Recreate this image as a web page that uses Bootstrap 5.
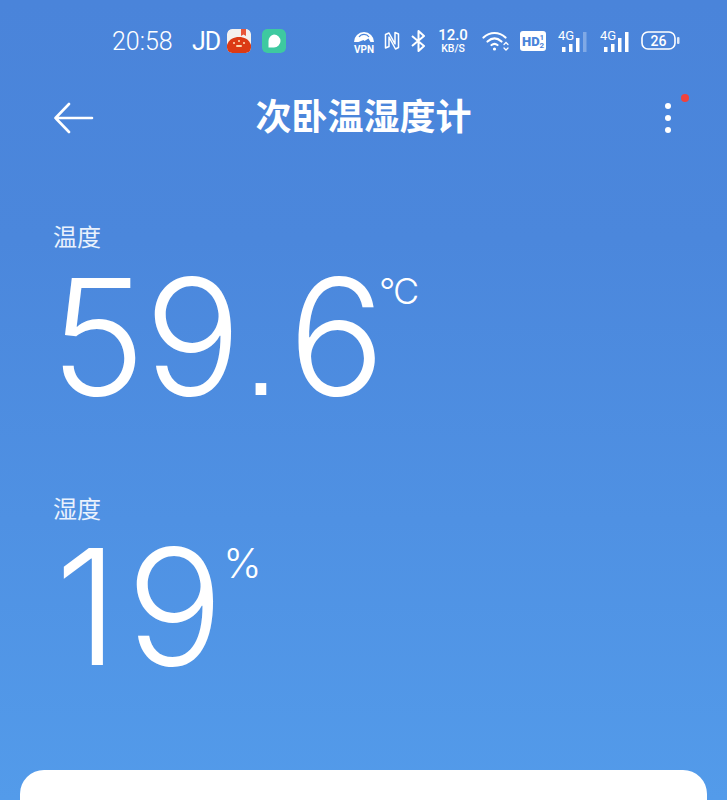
<!DOCTYPE html>
<html lang="zh-CN">
<head>
    <meta charset="UTF-8">
    <meta name="viewport" content="width=device-width, initial-scale=1.0">
    <title>次卧温湿度计</title>
    <link rel="stylesheet" href="https://cdn.jsdelivr.net/npm/bootstrap@5.3.0/dist/css/bootstrap.min.css">
    <script src="https://cdn.jsdelivr.net/npm/bootstrap@5.3.0/dist/js/bootstrap.bundle.min.js"></script>
    <style>
        html, body { height: 800px; overflow: hidden; }
        body { background: linear-gradient(180deg, #4a84da 0%, #4b87dc 30%, #539bea 100%); color: #fff; font-family: Roboto, "Noto Sans CJK SC", sans-serif; }
        .screen { height: 800px; }
        .status-bar { height: 82px; padding: 0 47px 0 112px; }
        .clock { font-size: 25px; width: 61px; line-height: 1; font-weight: 300; white-space: nowrap; }
        .carrier { font-size: 25px; line-height: 1; margin-left: 19px; width: 24px; letter-spacing: -1px; }
        .app-dot { width: 24px; height: 24px; border-radius: 5px; margin-left: 11px; display: block; }
        .net-speed { width: 30px; margin-left: 12px; text-align: center; line-height: 1; white-space: nowrap; }
        .net-speed b { display: block; font-size: 15px; font-weight: 500; line-height: 15px; }
        .net-speed span { display: block; font-size: 10.5px; font-weight: 500; line-height: 11px; }
        .stat-icon { display: block; flex: none; }
        .stat-icon text { font-family: Roboto, sans-serif; }
        .title-bar { height: 72px; display: grid; grid-template-columns: minmax(0, 1fr) auto minmax(0, 1fr); align-items: center; }
        .back-side { padding-left: 54px; }
        .page-title { font-size: 36px; font-weight: 700; line-height: 1; margin: 0; }
        .menu-wrap { position: relative; width: 30px; height: 40px; margin-left: auto; margin-right: 44px; gap: 6px; }
        .red-dot { position: absolute; top: -4px; right: -6px; width: 8px; height: 8px; border-radius: 50%; background: #f0423c; }
        .menu-pip { width: 6px; height: 6px; border-radius: 50%; background: #fff; }
        .reading-wrap { padding-left: 53px; }
        .reading-label { font-size: 24px; line-height: 1; font-weight: 400; color: #eaf2fd; }
        .temp-label { margin-top: 72px; }
        .hum-label { margin-top: 69px; }
        .big-num { font-family: Inter, Roboto, sans-serif; font-size: 161px; font-weight: 300; line-height: 1; }
        .temp-row { height: 173px; margin-top: 6px; }
        .temp-row .big-num { letter-spacing: -1px; margin-left: -3px; }
        .big-dot { font-family: "Liberation Sans", sans-serif; font-size: 111px; letter-spacing: 0; margin: 0 12px 0 5px; }
        .hum-row { height: 150px; margin-top: 4px; }
        .hum-row .big-num { margin-left: 2px; }
        .one-gap { margin-right: 8px; }
        .unit-text { font-family: Inter, Roboto, sans-serif; font-weight: 300; line-height: 1; }
        .temp-row .unit-text { font-size: 36px; margin-top: 17px; margin-left: -5px; letter-spacing: -2px; }
        .hum-row .unit-text { font-size: 41px; margin-top: 17px; }
        .sheet { position: absolute; left: 20px; right: 20px; top: 770px; height: 60px; background: #fff; border-radius: 24px 24px 0 0; }
    </style>
</head>
<body>
<div class="screen position-relative">

    <div class="status-bar d-flex align-items-center">
        <div class="clock">20:58</div>
        <div class="carrier">JD</div>
        <svg class="app-dot" viewBox="0 0 24 24">
            <rect width="24" height="24" rx="5" fill="#f4f1ee"/>
            <path d="M14 0h5v7l-2.500-1.500L14 7z" fill="#e8573a"/>
            <path d="M0 16C2 10 7 8 12 8s10 2 12 8v3a5 5 0 0 1-5 5H5a5 5 0 0 1-5-5z" fill="#dc3a14"/>
            <circle cx="12" cy="12" r="1.100" fill="#fbd9b0"/><circle cx="7" cy="14" r="1.100" fill="#fbd9b0"/><circle cx="17" cy="14" r="1.100" fill="#fbd9b0"/>
            <rect x="9" y="16" width="6" height="2" rx="1" fill="#fbd9b0"/>
        </svg>
        <svg class="app-dot" viewBox="0 0 24 24">
            <rect width="24" height="24" rx="5" fill="#3ec9a0"/>
            <path d="M12 5.500a6.500 6.500 0 0 1 0 13H6.500v-6.500A6.500 6.500 0 0 1 12 5.500z" fill="#fff"/>
        </svg>

        <svg class="stat-icon ms-auto" width="22" height="24" viewBox="0 0 22 24">
            <path d="M1 13a10 10 0 0 1 20 0h-3.500l-2-3.500-4 2.500-1-1-5 2z" fill="#fff"/>
            <path d="M6 8a6 6 0 0 1 10 0" stroke="#4a84da" stroke-width="1.200" fill="none"/>
            <text x="11" y="23.500" font-size="10" font-weight="700" fill="#fff" text-anchor="middle">VPN</text>
        </svg>
        <svg class="stat-icon" style="margin-left:9px" width="16" height="20" viewBox="0 0 16 20" fill="none" stroke="#fff" stroke-width="1.500" stroke-linejoin="round" stroke-linecap="round">
            <path d="M5 2 1.500 3.500v13.500L5 15.500V6l6.500 12 3-1.500V3L11 1.500V13z"/>
        </svg>
        <svg class="stat-icon" style="margin-left:11px" width="15" height="22" viewBox="0 0 15 22" fill="none" stroke="#fff" stroke-width="2" stroke-linejoin="round">
            <path d="M1 6l12 10-5.500 5V1L13 6 1 16"/>
        </svg>
        <div class="net-speed"><b>12.0</b><span>KB/S</span></div>
        <svg class="stat-icon" style="margin-left:14px" width="28" height="22" viewBox="0 0 28 22" fill="none" stroke="#fff" stroke-width="2.200" stroke-linecap="round">
            <path d="M1.500 7.500C8 1.500 17 1.500 23.500 7.500"/>
            <path d="M5.500 11.500c4.500-4 9.500-4 14 0"/>
            <path d="M9.500 15c2.200-1.800 3.800-1.800 6 0"/>
            <circle cx="12.500" cy="19" r="1.600" fill="#fff" stroke="none"/>
            <path d="M22 14.500l2-2 2 2M22 18l2 2 2-2" stroke-width="1.300"/>
        </svg>
        <svg class="stat-icon" style="margin-left:10px" width="26" height="20" viewBox="0 0 26 20">
            <rect width="26" height="20" rx="3" fill="#fff"/>
            <text x="2" y="15" font-size="13" font-weight="900" fill="#4a84da">HD</text>
            <text x="19.500" y="8.500" font-size="8" font-weight="700" fill="#4a84da">1</text>
            <text x="19.500" y="17" font-size="8" font-weight="700" fill="#4a84da">2</text>
        </svg>
        <svg class="stat-icon" style="margin-left:12px" width="30" height="24" viewBox="0 0 30 24">
            <text x="0" y="11" font-size="13" fill="#fff">4G</text>
            <rect x="4" y="18" width="3.500" height="5" fill="#fff"/><rect x="11" y="15" width="3.500" height="8" fill="#fff"/><rect x="18" y="9" width="3.500" height="14" fill="#fff"/><rect x="25" y="3" width="3.500" height="20" fill="#fff" fill-opacity=".3"/>
        </svg>
        <svg class="stat-icon" style="margin-left:12px" width="30" height="24" viewBox="0 0 30 24">
            <text x="0" y="11" font-size="13" fill="#fff">4G</text>
            <rect x="4" y="18" width="3.500" height="5" fill="#fff"/><rect x="11" y="15" width="3.500" height="8" fill="#fff"/><rect x="18" y="9" width="3.500" height="14" fill="#fff"/><rect x="25" y="3" width="3.500" height="20" fill="#fff"/>
        </svg>
        <svg class="stat-icon" style="margin-left:11px" width="39" height="20" viewBox="0 0 39 20">
            <rect x="1" y="1" width="33" height="17" rx="6" fill="none" stroke="#fff" stroke-width="1.600"/>
            <text x="17.500" y="15" font-size="14" font-weight="500" fill="#fff" text-anchor="middle">26</text>
            <rect x="36" y="6" width="2.500" height="7" rx="1" fill="#fff" fill-opacity=".8"/>
        </svg>
    </div>

    <div class="title-bar">
        <div class="back-side">
            <svg class="d-block" width="40" height="32" viewBox="0 0 40 32" fill="none" stroke="#fff" stroke-width="2.600" stroke-linecap="round" stroke-linejoin="round">
                <path d="M15 2 1.500 16 15 30M1.500 16H38"/>
            </svg>
        </div>
        <h1 class="page-title">次卧温湿度计</h1>
        <div class="d-flex">
            <div class="menu-wrap d-flex flex-column align-items-center justify-content-center">
                <span class="red-dot"></span>
                <span class="menu-pip"></span>
                <span class="menu-pip"></span>
                <span class="menu-pip"></span>
            </div>
        </div>
    </div>

    <div class="reading-wrap">
        <div class="reading-label temp-label">温度</div>
        <div class="d-flex temp-row">
            <div class="big-num">59<span class="big-dot">.</span>6</div>
            <div class="unit-text">°C</div>
        </div>
        <div class="reading-label hum-label">湿度</div>
        <div class="d-flex hum-row">
            <div class="big-num"><span class="one-gap">1</span>9</div>
            <div class="unit-text">%</div>
        </div>
    </div>

    <div class="sheet"></div>
</div>
</body>
</html>
